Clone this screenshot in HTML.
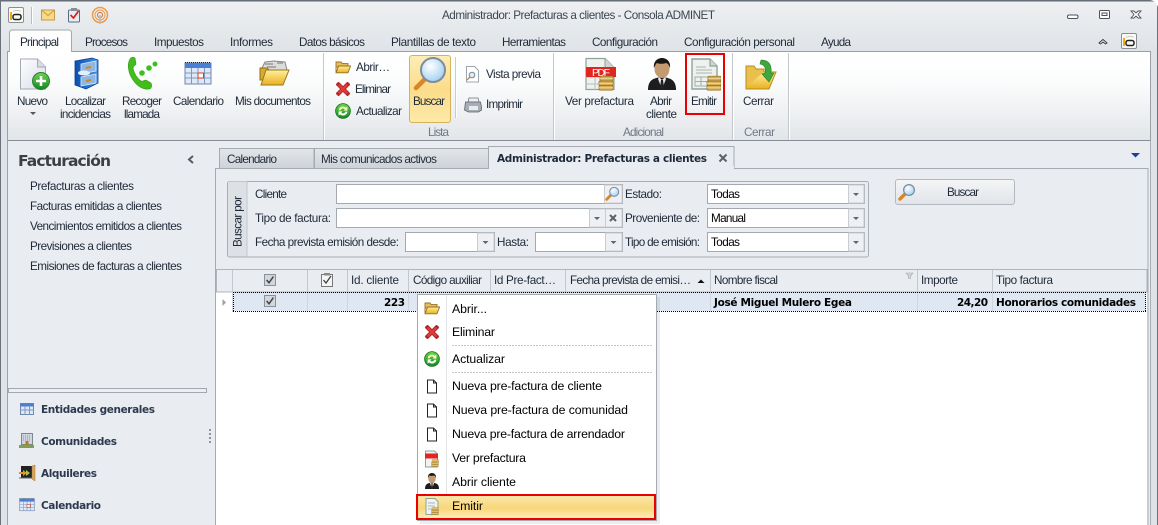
<!DOCTYPE html>
<html><head><meta charset="utf-8"><title>Consola ADMINET</title>
<style>
html,body{margin:0;padding:0;width:1158px;height:525px;overflow:hidden;background:#fff}
svg{display:block}
text{font-family:"Liberation Sans",sans-serif;font-size:11.7px;fill:#333b47;white-space:pre}
.b{font-weight:bold;font-family:"DejaVu Sans",sans-serif;font-size:10.5px;fill:#000}
.t text,text.t{fill:#1f2a38}
text.g{fill:#6f7a86}
.k text,text.k{fill:#000}
.m text{fill:#000;font-size:12.3px}
text.n{font-weight:bold;font-family:"DejaVu Sans",sans-serif;font-size:10.5px;fill:#2d3a4d}
</style></head><body>
<svg width="1158" height="525" viewBox="0 0 1158 525" xmlns="http://www.w3.org/2000/svg">
<defs>
<linearGradient id="gTop" x1="0" y1="0" x2="0" y2="1"><stop offset="0" stop-color="#eef0f2"/><stop offset="1" stop-color="#dfe3e7"/></linearGradient>
<linearGradient id="gRib" x1="0" y1="0" x2="0" y2="1"><stop offset="0" stop-color="#fff"/><stop offset=".35" stop-color="#fbfcfc"/><stop offset="1" stop-color="#e2e5e9"/></linearGradient>
<linearGradient id="gOrange" x1="0" y1="0" x2="0" y2="1"><stop offset="0" stop-color="#fdeeb8"/><stop offset=".5" stop-color="#fbdc8a"/><stop offset="1" stop-color="#fde9a8"/></linearGradient>
<linearGradient id="gMenu" x1="0" y1="0" x2="0" y2="1"><stop offset="0" stop-color="#fbe8ad"/><stop offset=".55" stop-color="#f8d77a"/><stop offset="1" stop-color="#fdf0c2"/></linearGradient>
<linearGradient id="gTab" x1="0" y1="0" x2="0" y2="1"><stop offset="0" stop-color="#e3e6e9"/><stop offset="1" stop-color="#ced2d7"/></linearGradient>
<linearGradient id="gBtn" x1="0" y1="0" x2="0" y2="1"><stop offset="0" stop-color="#f4f5f7"/><stop offset="1" stop-color="#e1e4e8"/></linearGradient>
<linearGradient id="gFold" x1="0" y1="0" x2="0" y2="1"><stop offset="0" stop-color="#fff0a0"/><stop offset="1" stop-color="#e9b01f"/></linearGradient>
<linearGradient id="gGreen" x1="0" y1="0" x2="0" y2="1"><stop offset="0" stop-color="#6fd24f"/><stop offset="1" stop-color="#128a22"/></linearGradient>
<linearGradient id="gBlue" x1="0" y1="0" x2="1" y2="0"><stop offset="0" stop-color="#0b4fae"/><stop offset="1" stop-color="#3f8fe8"/></linearGradient>
<linearGradient id="gPage" x1="0" y1="0" x2="1" y2="1"><stop offset="0" stop-color="#fff"/><stop offset="1" stop-color="#d5dbe8"/></linearGradient>
<radialGradient id="gLens" cx=".4" cy=".35" r=".7"><stop offset="0" stop-color="#fff"/><stop offset="1" stop-color="#9fcdf2"/></radialGradient>

<symbol id="folder" viewBox="0 0 16 14"><path d="M1 12V2h5l1.200 1.600H13V7H1z" fill="#e6bd58" stroke="#97711f" stroke-width=".9"/><path d="M1 12.800 3.600 6H15.600l-2.700 6.800z" fill="url(#gFold)" stroke="#97711f" stroke-width=".9"/></symbol>
<symbol id="redx" viewBox="0 0 14 14"><path d="M2.500 2.500 11.500 11.500M11.500 2.500 2.500 11.500" stroke="#b02a2a" stroke-width="4.200" stroke-linecap="square" fill="none"/><path d="M2.800 2.800 11.200 11.200M11.200 2.800 2.800 11.200" stroke="#e23b3b" stroke-width="2.200" fill="none"/></symbol>
<symbol id="refresh" viewBox="0 0 16 16"><circle cx="8" cy="8" r="7.400" fill="url(#gGreen)" stroke="#0f6e1a" stroke-width=".8"/><path d="M3.600 7.400A4.500 4.500 0 0 1 11 4.600L12.400 3.400V7.600H8.400L9.800 6.200A2.600 2.600 0 0 0 5.600 7.400z" fill="#f4f7b8"/><path d="M12.400 8.600A4.500 4.500 0 0 1 5 11.400L3.600 12.600V8.400H7.600L6.200 9.800A2.600 2.600 0 0 0 10.400 8.600z" fill="#fff"/></symbol>
<symbol id="page" viewBox="0 0 12 15"><path d="M1.500 1h6l3 3v10h-9z" fill="#fff" stroke="#222" stroke-width="1"/><path d="M7.500 1v3h3" fill="none" stroke="#222" stroke-width="1"/></symbol>
<symbol id="lens" viewBox="0 0 18 18"><path d="M2 16 7 11" stroke="#d9852a" stroke-width="3.400" stroke-linecap="round"/><circle cx="11" cy="7" r="5.400" fill="url(#gLens)" stroke="#7b8c9c" stroke-width="1.200"/></symbol>
<symbol id="coins" viewBox="0 0 16 16"><g fill="#d7ae55" stroke="#8a6a25" stroke-width=".7"><rect x="1" y="10.500" width="14" height="4.600" rx="1"/><rect x="1" y="6" width="14" height="4.600" rx="1"/><rect x="2" y="1.200" width="13" height="4.800" rx="1"/></g><path d="M2 3.600h13M1 8.300h14M1 12.800h14" stroke="#f1dca0" stroke-width=".8"/></symbol>
<symbol id="emit" viewBox="0 0 30 33"><path d="M1 1h18l7 7v23H1z" fill="#eef1ee" stroke="#8fa39a" stroke-width="1.400"/><path d="M19 1v7h7" fill="#cdd6d2" stroke="#8fa39a" stroke-width="1.200"/><path d="M5 9h10M5 12h16M5 15h16" stroke="#a9b7b0"/><path d="M4 19h20v9H4zM4 23.500h20M10 19v9M17 19v9" fill="none" stroke="#9db0a6"/><use href="#coins" x="15" y="17" width="16" height="16"/></symbol>
<symbol id="man" viewBox="0 0 28 32"><path d="M0 32c0-9 4-12 14-13 10 1 14 4 14 13z" fill="#1d1d1f"/><path d="M11 19l3 3 3-3 1 2-4 10-4-10z" fill="#e9e9e9"/><path d="M13 22h2l1 8-2 2-2-2z" fill="#222"/><ellipse cx="14" cy="11" rx="7.500" ry="9" fill="#c49a70"/><path d="M6 10C5 3 10 0 14 0s9 3 8 10c-1-3-2-4.500-4-5-3 1-7 1-9 0-1.500 1-2 3-3 5z" fill="#1b1613"/></symbol>
<symbol id="cal" viewBox="0 0 28 24"><rect x="1" y="2" width="26" height="21" fill="#dfe8f6" stroke="#6d86ad"/><rect x="1" y="2" width="26" height="5" fill="#4a7fd6"/><path d="M1 1.500h26" stroke="#222" stroke-dasharray="1 1"/><path d="M1 12h26M1 17h26M7.500 7v16M14 7v16M20.500 7v16" stroke="#7f97bd"/><rect x="14" y="12" width="5.500" height="5" fill="#fff" stroke="#e23a14"/></symbol>
<symbol id="app" viewBox="0 0 16 16"><rect x=".5" y=".5" width="15" height="15" rx="1.500" fill="#fbfbf6" stroke="#8a8f94"/><path d="M3 5v8" stroke="#f1a91c" stroke-width="2"/><rect x="5" y="7.500" width="8" height="5" rx="2" fill="none" stroke="#222" stroke-width="1.500"/><path d="M6 4h.01M8 3.500h.01M10 3.500h.01M12 4h.01" stroke="#777" stroke-linecap="round"/></symbol>
<symbol id="chk" viewBox="0 0 12 12"><rect x=".5" y=".5" width="11" height="11" fill="#d3d6da" stroke="#8b9198"/><path d="M2.600 6 5 8.800 9.400 2.600" fill="none" stroke="#444" stroke-width="1.500"/></symbol>
</defs>

<!-- window -->
<rect width="1158" height="525" fill="#dfe3e7"/>
<rect x="0" y="0" width="1158" height="52" fill="url(#gTop)"/>
<rect x="0" y="0" width="1158" height="1.500" fill="#656d76"/>
<rect x="0" y="0" width="1" height="525" fill="#6b7178"/>
<rect x="1157" y="0" width="1" height="525" fill="#6b7178"/>
<path d="M1150 0h8v8q-1-7-8-8z" fill="#fff"/>
<rect x="7" y="140" width="1144" height="385" fill="#e9ecf1"/>
<rect x="7" y="141" width="1" height="384" fill="#9da3aa"/>
<rect x="1150" y="141" width="1" height="384" fill="#a9aeb4"/>
<rect x="1151" y="141" width="6" height="384" fill="#dfe3e7"/>

<!-- quick access -->
<use href="#app" x="8" y="7" width="16" height="16"/>
<path d="M31.500 7v17" stroke="#b7bcc2"/><path d="M32.500 7v17" stroke="#fff"/>
<rect x="41.500" y="10" width="13" height="10" fill="#f6d98a" stroke="#c99b3e"/><path d="M42 10.500l6 5 6-5" fill="none" stroke="#c99b3e"/>
<rect x="68.500" y="10" width="11" height="12" rx="1" fill="#e7ecf2" stroke="#5a6a82"/><rect x="71" y="8" width="6" height="3" fill="#8a8f94"/><path d="M70.500 15l3 3 5-7" fill="none" stroke="#d22a1e" stroke-width="1.800"/>
<g fill="none" stroke="#ef9b45"><circle cx="100" cy="15" r="7.500" stroke-width="1.500"/><circle cx="100" cy="15" r="5"/><circle cx="100" cy="15" r="2.500" stroke="#c96a3a"/></g><path d="M100 15v9" stroke="#b9b9b9" stroke-width="1.500"/>

<!-- title -->
<text x="442" y="19" textLength="273" style="fill:#3d4652">Administrador: Prefacturas a clientes - Consola ADMINET</text>
<rect x="1067.500" y="15" width="10.500" height="3.500" rx="1.500" fill="#fff" stroke="#4a525c"/>
<rect x="1099.500" y="10.500" width="10" height="8" rx="1" fill="#fff" stroke="#4a525c"/><rect x="1102" y="13" width="5" height="2.500" fill="none" stroke="#4a525c"/>
<path d="M1131 11l3 0 2 2 2-2h3l-3 3.500 3 3.500h-3l-2-2-2 2h-3l3-3.500z" fill="#fff" stroke="#4a525c" stroke-width=".9"/>

<!-- ribbon -->
<rect x="7.500" y="51.500" width="1143" height="89" fill="url(#gRib)" stroke="#9aa0a6"/>
<path d="M8 140.500h1142" stroke="#878d94"/>
<path d="M9.500 52V33q0-3 3-3h56q3 0 3 3v19" fill="#fdfdfe" stroke="#a3a9af"/>
<rect x="10" y="50" width="61" height="4" fill="#fff"/>
<g class="t">
<text x="20" y="46" textLength="39">Principal</text>
<text x="85" y="46" textLength="43">Procesos</text>
<text x="154" y="46" textLength="50">Impuestos</text>
<text x="230" y="46" textLength="43">Informes</text>
<text x="299" y="46" textLength="66">Datos básicos</text>
<text x="391" y="46" textLength="85">Plantillas de texto</text>
<text x="502" y="46" textLength="64">Herramientas</text>
<text x="592" y="46" textLength="66">Configuración</text>
<text x="684" y="46" textLength="111">Configuración personal</text>
<text x="821" y="46" textLength="30">Ayuda</text>
</g>
<path d="M1099 43l4-3.500 4 3.500-1.500 1-2.500-2-2.500 2z" fill="#fff" stroke="#333" stroke-width=".9"/>
<use href="#app" x="1121" y="33" width="16" height="16"/>

<path d="M323.500 53v87M553.500 53v87M732.500 53v87M788.500 53v87" stroke="#c4c8cd"/>
<path d="M324.500 53v87M554.500 53v87M733.500 53v87M789.500 53v87" stroke="#fff"/>

<!-- large icons -->
<path d="M20.500 59h17l8 8v22h-25z" fill="url(#gPage)" stroke="#a4a9b2"/><path d="M37.500 59v8h8" fill="#d8dce4" stroke="#a4a9b2"/>
<circle cx="41" cy="81" r="8.500" fill="url(#gGreen)" stroke="#2e7f32"/><path d="M41 76v10M36 81h10" stroke="#fff" stroke-width="2.600"/>

<path d="M75 61 92 58l6 2v23l-12 6-11-4z" fill="url(#gBlue)" stroke="#0c3f8c" stroke-width=".8"/>
<path d="M81 64l15-3v10l-15 3zM81 77l15-3v9l-15 3z" fill="#8fb6e3" stroke="#d9e8f8" stroke-width=".8"/>
<path d="M86 68l5-1M86 81l5-1" stroke="#c78a2a" stroke-width="2"/>
<ellipse cx="84" cy="73" rx="6" ry="2.500" fill="#e6eef7"/>

<path d="M130 59c-3 5-2 14 3 21 4 6 10 10 16 9 3 0 3-4 2-6l-5-3c-2 0-3 2-5 1-4-3-7-8-8-13 0-2 2-2 3-4l-1-6c-2-1-4-1-5 1z" fill="#43bd1b" stroke="#2f9a14" stroke-width=".6"/>
<circle cx="142" cy="73" r="2.800" fill="#3fbe1d"/><circle cx="149" cy="68" r="2.800" fill="#3fbe1d"/><circle cx="155" cy="64" r="2.500" fill="#3fbe1d"/>

<use href="#cal" x="184" y="61" width="28" height="24"/>

<g><path d="M262 68l3-6 9-1 11 1 2 8-20 6z" fill="#dcdcd8" stroke="#888"/><path d="M265 64h8M267 67h9M277 63h6" stroke="#777"/><path d="M260 68h7l2 2h12v10h-21z" fill="#d7ab2c" stroke="#8e6e1c"/><path d="M261 85l5-15h23l-6 15z" fill="url(#gFold)" stroke="#9a7719"/></g>

<!-- Buscar button -->
<rect x="409.500" y="55.500" width="41" height="67" rx="2.500" fill="url(#gOrange)" stroke="#d6b35a"/>
<path d="M416 88 426 78" stroke="#d9852a" stroke-width="4.500" stroke-linecap="round"/>
<circle cx="433" cy="70" r="12" fill="url(#gLens)" stroke="#7f8d9b" stroke-width="2"/>
<path d="M455.500 57v61" stroke="#c9cdd2"/><path d="M456.500 57v61" stroke="#fff"/>

<!-- small ribbon icons -->
<use href="#folder" x="335" y="60" width="16" height="14"/>
<use href="#redx" x="336" y="82" width="14" height="14"/>
<use href="#refresh" x="335" y="103" width="16" height="16"/>
<path d="M466.500 66.500h8l4 4v11.500h-12z" fill="#fff" stroke="#a0a5ad"/><circle cx="472" cy="75" r="2.800" fill="#dcecf9" stroke="#7b8793"/><path d="M470 77l-3 3" stroke="#c98a3a" stroke-width="1.400"/>
<path d="M469 98h9l1 4h-11z" fill="#eef1f4" stroke="#6e7680" stroke-width=".8"/><path d="M465.500 102h15l1 5v3l-3 2h-10l-4-2z" fill="#a7adb5" stroke="#5e6570" stroke-width=".8"/><rect x="469" y="106" width="9" height="4" fill="#e9ebee"/>

<path d="M586 58.500h19l9 9v22h-28z" fill="#eef1ee" stroke="#8fa39a" stroke-width="1.200"/><path d="M605 58.500v9h9" fill="#cdd6d2" stroke="#8fa39a"/>
<path d="M586 77h28M586 84h28M595 77v13M605 77v13" stroke="#b3bfb8"/>
<rect x="586" y="67" width="30" height="10" fill="#e2261f"/>
<text x="592" y="76" style="font-size:10.500px;fill:#fff" textLength="18">PDF</text>
<use href="#coins" x="597" y="75" width="18" height="16"/>
<use href="#man" x="648" y="58" width="28" height="32"/>
<use href="#emit" x="691" y="58" width="30" height="33"/>

<path d="M746 87l4-15h26l-7 17h-23z" fill="url(#gFold)" stroke="#b88d1a"/><path d="M746 87V66h8l2 3h8v3" fill="#eac04c" stroke="#b88d1a"/>
<path d="M761 60c8 0 11 5 10 13l3 0-5 9-7-8 3-1c1-5 0-8-5-9z" fill="#3fa83a" stroke="#2c7f2b" stroke-width=".6"/>

<!-- Emitir red box -->
<rect x="686" y="54" width="38" height="60" fill="none" stroke="#ea0000" stroke-width="2"/>

<g class="t">
<text x="17" y="105" textLength="31">Nuevo</text>
<path d="M30 112h6l-3 3z" fill="#555"/>
<text x="65" y="105" textLength="41">Localizar</text>
<text x="60" y="118" textLength="51">incidencias</text>
<text x="122" y="105" textLength="40">Recoger</text>
<text x="124" y="118" textLength="36">llamada</text>
<text x="173" y="105" textLength="51">Calendario</text>
<text x="235" y="105" textLength="76">Mis documentos</text>
<text x="356" y="71" textLength="34">Abrir…</text>
<text x="355" y="93" textLength="36">Eliminar</text>
<text x="356" y="115" textLength="46">Actualizar</text>
<text x="413" y="105" textLength="32">Buscar</text>
<text x="486" y="78" textLength="55">Vista previa</text>
<text x="486" y="108" textLength="37">Imprimir</text>
<text x="565" y="105" textLength="69">Ver prefactura</text>
<text x="650" y="105" textLength="22">Abrir</text>
<text x="646" y="118" textLength="31">cliente</text>
<text x="691" y="105" textLength="26">Emitir</text>
<text x="743" y="105" textLength="31">Cerrar</text>
</g>
<text class="g" x="428" y="136" textLength="21">Lista</text>
<text class="g" x="623" y="136" textLength="41">Adicional</text>
<text class="g" x="744" y="136" textLength="31">Cerrar</text>

<!-- left nav -->
<text x="18" y="166" textLength="93" style="font-family:'DejaVu Sans',sans-serif;font-weight:bold;font-size:15.500px;fill:#3d3f45">Facturación</text>
<path d="M193 156l-4 3.500 4 3.500" fill="none" stroke="#555c66" stroke-width="2"/>
<g class="t">
<text x="30" y="190" textLength="104">Prefacturas a clientes</text>
<text x="30" y="210" textLength="132">Facturas emitidas a clientes</text>
<text x="30" y="230" textLength="152">Vencimientos emitidos a clientes</text>
<text x="30" y="250" textLength="102">Previsiones a clientes</text>
<text x="30" y="270" textLength="152">Emisiones de facturas a clientes</text>
</g>
<rect x="8.500" y="388.500" width="198" height="4" fill="#eceef1" stroke="#a3a8ae"/>
<path d="M210 429v2M210 433v2M210 437v2M210 441v2" stroke="#8f959c" stroke-width="2"/>

<rect x="20.500" y="403.500" width="13" height="11" fill="#dfe8f6" stroke="#6d86ad"/><rect x="20.500" y="403.500" width="13" height="3" fill="#4a7fd6"/><path d="M20 410h14M25 406v9M29.500 406v9" stroke="#7f97bd"/>
<rect x="21.500" y="433.500" width="11" height="11" fill="#cfd6de" stroke="#7a8a8a"/><path d="M23 436h8M23 438h8M23 440h8" stroke="#8f9aa3" stroke-dasharray="1 1"/><rect x="25.500" y="441" width="3" height="5" fill="#b5792e"/><rect x="19" y="445" width="15" height="3" fill="#7ea24a"/>
<rect x="21" y="466" width="11" height="12" fill="#222"/><path d="M32 466l3-1v16l-3-2z" fill="#d8a762" stroke="#a5793a" stroke-width=".5"/><path d="M19 472h4v-2l4 3-4 3v-2h-4z" fill="#e8922a"/><path d="M26 470l4 3-4 3z" fill="#9ccb3b"/><path d="M19 478h13" stroke="#666"/>
<use href="#cal" x="19" y="497" width="16" height="15"/>
<text class="n" x="41" y="413" textLength="114">Entidades generales</text>
<text class="n" x="41" y="445" textLength="76">Comunidades</text>
<text class="n" x="41" y="477" textLength="56">Alquileres</text>
<text class="n" x="41" y="509" textLength="60">Calendario</text>

<!-- doc tabs -->
<rect x="215.500" y="168.500" width="932.500" height="360" fill="#e9ecf1" stroke="#a5abb1"/>
<rect x="219.500" y="148.500" width="94.500" height="20" fill="url(#gTab)" stroke="#a5abb1"/>
<rect x="314.500" y="148.500" width="174" height="20" fill="url(#gTab)" stroke="#a5abb1"/>
<path d="M488.500 169v-22.500h245.500v22.500" fill="#e9ecf1" stroke="#a5abb1"/>
<rect x="489" y="166" width="245" height="4" fill="#e9ecf1"/>
<text class="t" x="227" y="163" textLength="50">Calendario</text>
<text class="t" x="321" y="163" textLength="116">Mis comunicados activos</text>
<text class="b" x="497" y="162" textLength="210" style="fill:#1f2a38">Administrador: Prefacturas a clientes</text>
<path d="M719.500 154.500l7 7M726.500 154.500l-7 7" stroke="#59616b" stroke-width="2"/>
<path d="M1131 153h9l-4.500 4.500z" fill="#1f3fa0"/>

<!-- filter group -->
<rect x="227.500" y="181.500" width="641" height="75.500" rx="2" fill="#e9ecf1" stroke="#a9aeb4"/>
<path d="M228 183a1.500 1.500 0 0 1 1.500-1.500H247V256.500H229.500A1.500 1.500 0 0 1 228 255z" fill="#dde0e4"/>
<path d="M247 182v75" stroke="#c3c7cc"/>
<text class="t" transform="translate(241.500 247) rotate(-90)" textLength="51">Buscar por</text>

<g class="t">
<text x="255" y="198" textLength="32">Cliente</text>
<text x="255" y="222" textLength="76">Tipo de factura:</text>
<text x="255" y="246" textLength="144">Fecha prevista emisión desde:</text>
<text x="497" y="246" textLength="32">Hasta:</text>
<text x="625" y="198" textLength="37">Estado:</text>
<text x="625" y="222" textLength="75">Proveniente de:</text>
<text x="625" y="246" textLength="75">Tipo de emisión:</text>
</g>
<g fill="#fff" stroke="#a4a9af">
<rect x="336.500" y="184.500" width="286" height="19"/>
<rect x="336.500" y="208.500" width="286" height="19"/>
<rect x="405.500" y="232.500" width="89" height="19"/>
<rect x="535.500" y="232.500" width="87" height="19"/>
<rect x="707.500" y="184.500" width="157" height="19"/>
<rect x="707.500" y="208.500" width="157" height="19"/>
<rect x="707.500" y="232.500" width="157" height="19"/>
</g>
<g fill="#eef0f3" stroke="#c9cdd2">
<rect x="604.500" y="185" width="17.500" height="18"/>
<rect x="589.500" y="209" width="16" height="18"/>
<rect x="605.500" y="209" width="16.500" height="18"/>
<rect x="477.500" y="233" width="16.500" height="18"/>
<rect x="605.500" y="233" width="16.500" height="18"/>
<rect x="848.500" y="185" width="15.500" height="18"/>
<rect x="848.500" y="209" width="15.500" height="18"/>
<rect x="848.500" y="233" width="15.500" height="18"/>
</g>
<g fill="#60676f">
<path d="M594 217h6l-3 3zM482.500 241h6l-3 3zM610.500 241h6l-3 3zM853 193h6l-3 3zM853 217h6l-3 3zM853 241h6l-3 3z"/>
</g>
<use href="#lens" x="605" y="186" width="15" height="15"/>
<path d="M610 215l6 6M616 215l-6 6" stroke="#59616b" stroke-width="2"/>
<text class="k" x="711" y="198" textLength="29">Todas</text>
<text class="k" x="711" y="222" textLength="35">Manual</text>
<text class="k" x="711" y="246" textLength="29">Todas</text>

<rect x="895.500" y="179.500" width="119" height="25" rx="2.500" fill="url(#gBtn)" stroke="#b3b8be"/>
<use href="#lens" x="898" y="183" width="18" height="18"/>
<text class="t" x="947" y="196" textLength="32">Buscar</text>

<!-- grid -->
<rect x="216" y="269" width="931" height="256" fill="#fff"/>
<rect x="216.500" y="269.500" width="930.500" height="22.500" fill="#e9ecf1" stroke="#b0b5bb"/>
<path d="M232.500 270v41M307.500 270v41M347.500 270v41M408.500 270v41M490.500 270v22M565.500 270v22M710.500 270v41M917.500 270v41M992.500 270v41" stroke="#c3c8ce"/>
<use href="#chk" x="264" y="274" width="12" height="12"/>
<rect x="321.500" y="274.500" width="11" height="12" fill="#f4f5f6" stroke="#777"/><rect x="324" y="273" width="6" height="2.500" fill="#888"/><path d="M323.500 280l2.500 3 5-7" fill="none" stroke="#444" stroke-width="1.300"/>
<g class="t">
<text x="351" y="284" textLength="48">Id. cliente</text>
<text x="413" y="284" textLength="69">Código auxiliar</text>
<text x="494" y="284" textLength="62">Id Pre-fact…</text>
<text x="570" y="284" textLength="121">Fecha prevista de emisi…</text>
<text x="714" y="284" textLength="64">Nombre fiscal</text>
<text x="921" y="284" textLength="37">Importe</text>
<text x="996" y="284" textLength="57">Tipo factura</text>
</g>
<path d="M697.500 283l3.500-3.500 3.500 3.500z" fill="#111"/>
<path d="M906 273h7l-2.500 3v2.500h-2V276z" fill="#d2d6da" stroke="#a3a8ae" stroke-width=".6"/>

<rect x="233.500" y="292.500" width="912" height="18.500" fill="#dee7f2"/>
<path d="M232.500 292v20M307.500 292v20M347.500 292v20M408.500 292v20M710.500 292v20M917.500 292v20M992.500 292v20" stroke="#cfd6df"/>
<path d="M233 292.500h913M233 311.500h913M233.500 292v20M1145.500 292v20" fill="none" stroke="#000" stroke-dasharray="1 1"/>
<path d="M222.500 299v7l3.500-3.500z" fill="#9aa0a7"/>
<use href="#chk" x="264" y="295" width="12" height="12"/>
<text class="b" x="384" y="306" textLength="21">223</text>
<text class="b" x="714" y="306" textLength="138">José Miguel Mulero Egea</text>
<text class="b" x="957" y="306" textLength="31">24,20</text>
<text class="b" x="996" y="306" textLength="140">Honorarios comunidades</text>

<!-- context menu -->
<rect x="420" y="297" width="240" height="227" fill="#000" opacity=".07"/>
<rect x="417.500" y="294.500" width="239" height="226" fill="#fff" stroke="#a6abb1"/>
<path d="M446.500 295v199" stroke="#e3e5e8"/>
<path d="M452 345.500h201M452 372.500h201" stroke="#c3c3c3" stroke-dasharray="2 1"/>
<use href="#folder" x="424" y="301" width="16" height="14"/>
<use href="#redx" x="425" y="325" width="14" height="14"/>
<use href="#refresh" x="424" y="351" width="16" height="16"/>
<use href="#page" x="426" y="379" width="12" height="15"/>
<use href="#page" x="426" y="403" width="12" height="15"/>
<use href="#page" x="426" y="427" width="12" height="15"/>
<path d="M425.500 451h9l3 3v13h-12z" fill="#f1f3f1" stroke="#8fa39a"/><rect x="425" y="453.500" width="13" height="5" fill="#e2261f"/><use href="#coins" x="431" y="459" width="8" height="8"/>
<use href="#man" x="425" y="473" width="14" height="16"/>

<rect x="418" y="495" width="236.500" height="24" rx="2" fill="url(#gMenu)" stroke="#eccb78" stroke-width=".6"/>
<path d="M426 498.500h9l3 3v13h-12z" fill="#f1f3f1" stroke="#8fa39a"/><path d="M428 503h7M428 506h7M428 509h4" stroke="#a9b7b0"/><use href="#coins" x="431" y="507" width="8" height="8"/>
<rect x="417" y="495" width="238" height="24" fill="none" stroke="#ea0000" stroke-width="2"/>
<g class="m">
<text x="452" y="313" textLength="35">Abrir...</text>
<text x="452" y="336" textLength="43">Eliminar</text>
<text x="452" y="363" textLength="53">Actualizar</text>
<text x="452" y="390" textLength="150">Nueva pre-factura de cliente</text>
<text x="452" y="414" textLength="176">Nueva pre-factura de comunidad</text>
<text x="452" y="438" textLength="173">Nueva pre-factura de arrendador</text>
<text x="452" y="462" textLength="74">Ver prefactura</text>
<text x="452" y="486" textLength="64">Abrir cliente</text>
<text x="452" y="510" textLength="31">Emitir</text>
</g>
</svg>
</body></html>
